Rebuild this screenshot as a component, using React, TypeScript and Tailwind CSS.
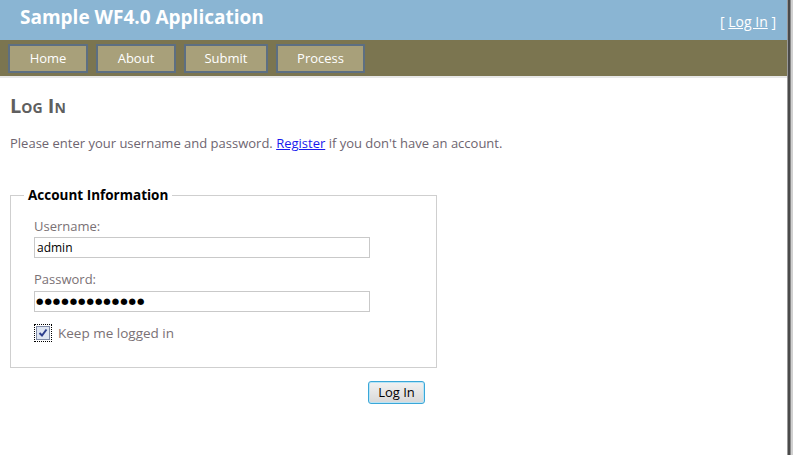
import React from "react";

const navItems = [
  { label: "Home", w: "w-[80px]" },
  { label: "About", w: "w-[80px]" },
  { label: "Submit", w: "w-[84px]" },
  { label: "Process", w: "w-[89px]" },
];

const App = () => {
  return (
    <div className="w-[793px] h-[455px] flex bg-white overflow-hidden" style={{ fontFamily: '"Open Sans", "Noto Sans", sans-serif' }}>
      <div className="w-[787px] flex flex-col">
        <div className="h-[40px] bg-[#8ab5d3] flex items-start justify-between pl-[20px] pr-[11px]">
          <h1 className="text-[19px] font-bold text-white leading-none mt-[8px]">Sample WF4.0 Application</h1>
          <div className="text-[14px] text-white mt-[11px]">
            [ <a href="#" className="underline">Log In</a> ]
          </div>
        </div>
        <div className="h-[36px] bg-[#7b7550] flex items-start gap-[8px] pl-[8px] pt-[4px]">
          {navItems.map((item) => (
            <div
              key={item.label}
              className={`h-[29px] bg-[#a8a07a] border-2 border-[#5d6f82] flex items-center justify-center text-[13px] text-white ${item.w}`}
            >
              {item.label}
            </div>
          ))}
        </div>
        <div className="h-[2px] bg-[#e8e8e8]" />

        <div className="pl-[10px] pt-[18px]">
          <h2 className="text-[#5f5f5f] font-bold text-[20px] leading-none [font-variant:small-caps]">Log In</h2>
          <p className="text-[#6e6570] text-[13px] mt-[21px] leading-none">
            Please enter your username and password.{" "}
            <a href="#" className="text-[#1a1aee] underline">Register</a> if you don't have an account.
          </p>

          <fieldset className="w-[427px] mt-[39px] border border-[#cfcfcf] pl-[23px] pt-[4px] pb-[24px]">
            <legend className="ml-[-10px] px-[4px] text-[13.5px] font-bold text-black leading-none">Account Information</legend>
            <div className="mt-[13px] text-[13px] text-[#7a7175] leading-none">Username:</div>
            <input
              readOnly
              value="admin"
              className="mt-[4px] w-[336px] h-[21px] border border-[#c9c9c9] px-[2px] text-[12px] text-black outline-none"
            />
            <div className="mt-[15px] text-[13px] text-[#7a7175] leading-none">Password:</div>
            <input
              readOnly
              value="●●●●●●●●●●●●●"
              className="mt-[5px] w-[336px] h-[21px] border border-[#c9c9c9] px-[1px] text-[8.5px] tracking-[1px] text-black outline-none"
              style={{ fontFamily: '"DejaVu Sans", sans-serif' }}
            />
            <div className="flex items-center mt-[11px] gap-[6px]">
              <div className="w-[18px] h-[18px] border border-dotted border-black p-[1px]">
                <div className="w-full h-full border border-[#7f8aa6] bg-[#dfe6f3] flex items-center justify-center">
                  <svg width="10" height="10" viewBox="0 0 10 10">
                    <path d="M1.5 5 L4 7.5 L8.5 1.5" stroke="#2d3f8e" strokeWidth="2" fill="none" />
                  </svg>
                </div>
              </div>
              <span className="text-[13.5px] text-[#7a7175]">Keep me logged in</span>
            </div>
          </fieldset>

          <div className="w-[415px] flex justify-end mt-[13px]">
            <button className="w-[57px] h-[23px] rounded-[3px] border border-[#3aa7d8] bg-gradient-to-b from-[#f2f2f2] to-[#d8d8d8] text-[13px] text-black leading-none shadow-[inset_0_0_0_1px_#b9e4f6]">
              Log In
            </button>
          </div>
        </div>
      </div>
      <div className="w-[6px] flex">
        <div className="w-[1px] bg-[#9a9a9a]" />
        <div className="w-[2px] bg-[#4a4a4a]" />
        <div className="w-[1px] bg-[#8a8a8a]" />
        <div className="w-[2px] bg-[#d0d0d0]" />
      </div>
    </div>
  );
};

export default App;
